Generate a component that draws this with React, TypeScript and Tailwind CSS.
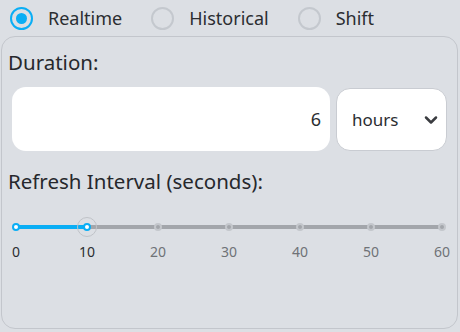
import { ChevronDown } from 'lucide-react';

const options = ['Realtime', 'Historical', 'Shift'];
const ticks = [0, 10, 20, 30, 40, 50, 60];

function Radio({ label, checked }: { label: string; checked?: boolean }) {
  return (
    <label className="flex items-center gap-[15px]">
      <span
        className={`flex h-[23px] w-[23px] items-center justify-center rounded-full border-[2.5px] ${
          checked ? 'border-[#0aaef5]' : 'border-[#c4c8ce]'
        }`}
      >
        {checked && <span className="h-[11px] w-[11px] rounded-full bg-[#0aaef5]" />}
      </span>
      <span className="text-[18px] text-[#2b2d31]">{label}</span>
    </label>
  );
}

export default function App() {
  const value = 10;
  return (
    <div className="h-[332px] w-[460px] bg-[#dcdfe4] font-['Noto_Sans',sans-serif]">
      <div className="flex h-[36px] items-center gap-[29px] pl-[10px]">
        {options.map((o, i) => (
          <Radio key={o} label={o} checked={i === 0} />
        ))}
      </div>

      <div className="mx-[1px] h-[293px] w-[457px] rounded-[14px] border border-[#c3c6cc] px-[6px] pt-[12px]">
        <div className="text-[20.5px] leading-[26px] text-[#26282c]">Duration:</div>

        <div className="mt-[12px] flex items-start gap-[6px] pl-[4px]">
          <div className="flex h-[64px] w-[318px] items-center justify-end rounded-[14px] bg-white pr-[9px] text-[18px] text-[#2b2d31]">
            6
          </div>
          <div className="mt-[1px] flex h-[63px] w-[111px] items-center justify-between rounded-[14px] border border-[#c9ccd2] bg-white pl-[15px] pr-[5px] text-[17px] text-[#2b2d31]">
            hours
            <ChevronDown className="h-[20px] w-[20px] text-[#3a3c40]" strokeWidth={3} />
          </div>
        </div>

        <div className="mt-[17px] text-[20.5px] leading-[26px] text-[#26282c]">Refresh Interval (seconds):</div>

        <div className="mt-[22px] pl-[8px]">
          <div className="relative h-[22px] w-[426px]">
            <div className="absolute left-0 right-0 top-[9px] h-[4px] rounded bg-[#a3a6ab]" />
            <div
              className="absolute left-0 top-[9px] h-[4px] bg-[#0aaef5]"
              style={{ width: `${(value / 60) * 426}px` }}
            />
            {ticks.map((t) => {
              const x = (t / 60) * 426;
              const active = t <= value;
              return (
                <span
                  key={t}
                  className={`absolute top-[7px] h-[8px] w-[8px] -translate-x-1/2 rounded-full border-2 ${
                    active ? 'border-[#0aaef5] bg-white' : 'border-[#c4c7cc] bg-[#a3a6ab]'
                  }`}
                  style={{ left: `${x}px` }}
                />
              );
            })}
            <span
              className="absolute top-[1px] h-[20px] w-[20px] -translate-x-1/2 rounded-full border border-[#c0c3c8]"
              style={{ left: `${(value / 60) * 426}px` }}
            />
          </div>
          <div className="relative mt-[3px] h-[20px] w-[426px]">
            {ticks.map((t) => (
              <span
                key={t}
                className={`absolute -translate-x-1/2 text-[14px] ${t <= value ? 'text-[#2b2d31]' : 'text-[#6f7277]'}`}
                style={{ left: `${(t / 60) * 426}px` }}
              >
                {t}
              </span>
            ))}
          </div>
        </div>
      </div>
    </div>
  );
}
